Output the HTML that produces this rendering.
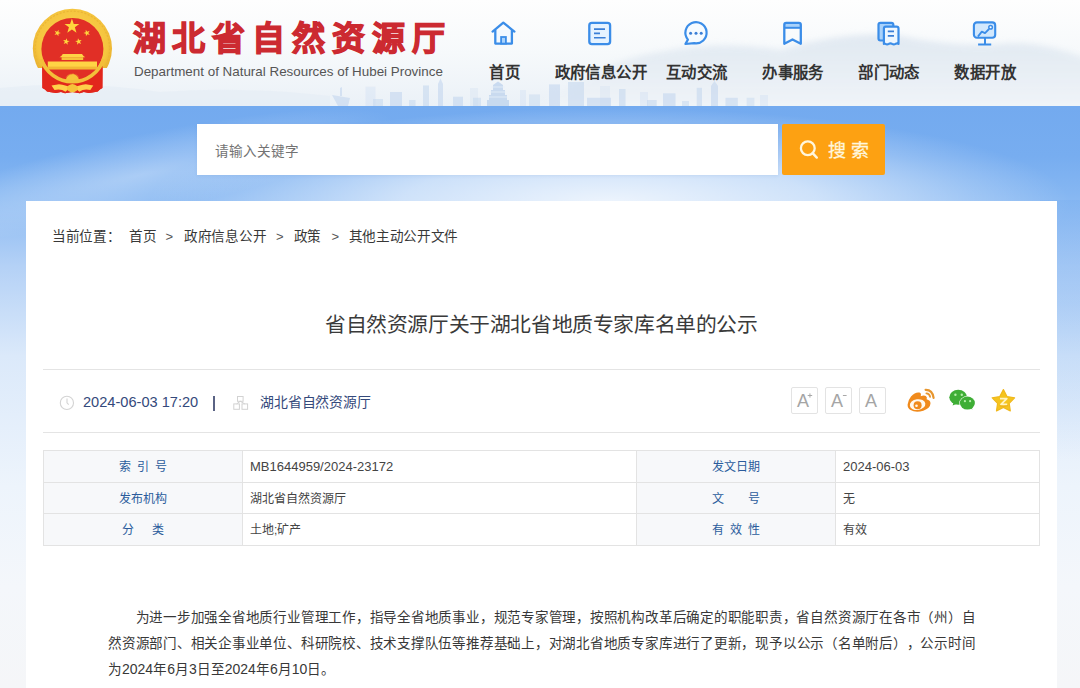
<!DOCTYPE html>
<html lang="zh-CN"><head><meta charset="utf-8">
<style>
*{margin:0;padding:0;box-sizing:border-box}
html,body{width:1080px;height:688px;overflow:hidden;background:#f4f7fb}
body{position:relative;font-family:"Liberation Sans",sans-serif;color:#333;text-spacing-trim:space-all}
.abs{position:absolute}
#hdr{left:0;top:0;width:1080px;height:106px;background:linear-gradient(180deg,#fefefe 0%,#f6f9fb 50%,#ebf1f7 100%);overflow:hidden}
#band{left:0;top:106px;width:1080px;height:582px;background:linear-gradient(180deg,#73aaef 0px,#77adf0 50px,#86b7f2 90px,#b4d1f6 160px,#dbe9fa 250px,#edf4fc 380px,#f4f7fb 480px,#f5f6f8 582px)}
#glow{left:110px;top:108px;width:960px;height:190px;background:radial-gradient(closest-side ellipse at 52% 50%,rgba(255,255,255,.85) 0%,rgba(255,255,255,.6) 45%,rgba(255,255,255,.2) 80%,rgba(255,255,255,0) 100%)}
#rstrip{left:1040px;top:200px;width:40px;height:260px;background:linear-gradient(180deg,rgba(120,174,240,.35) 0%,rgba(120,174,240,.3) 40%,rgba(120,174,240,0) 100%)}
#streak{left:-120px;top:135px;width:520px;height:80px;transform:rotate(-12deg);background:radial-gradient(closest-side ellipse,rgba(255,255,255,.35) 0%,rgba(255,255,255,.15) 60%,rgba(255,255,255,0) 100%)}
#title{left:132.5px;top:16.5px;font-size:33px;font-weight:700;color:#cc2a31;letter-spacing:6.9px;white-space:nowrap;line-height:44px;-webkit-text-stroke:1.3px #cc2a31;text-shadow:0 0 2px #fff,0 0 3px #fff}
#sub{left:134px;top:64px;font-size:13.4px;color:#555;white-space:nowrap;line-height:16px}
.nav{top:62px;width:120px;text-align:center;font-size:15.4px;letter-spacing:0.4px;text-indent:0.4px;font-weight:700;color:#333;line-height:22px;white-space:nowrap}
#sinput{left:197px;top:124px;width:581px;height:51px;background:#fff;box-shadow:0 1px 3px rgba(60,110,180,.10)}
#sinput span{position:absolute;left:18px;top:18.8px;font-size:13.6px;color:#737373;line-height:18px;white-space:nowrap}
#sbtn{left:782px;top:124px;width:103px;height:51px;background:#fda112;border-radius:2px}
#sbtn span{position:absolute;left:46px;top:16px;-webkit-text-stroke:0.3px #fff6dc;font-size:18px;color:#fff6dc;letter-spacing:5px;line-height:22px;white-space:nowrap}
#card{left:26px;top:201px;width:1031px;height:500px;background:#fff}
.crumb{top:227.8px;font-size:13.6px;color:#383838;line-height:18px;white-space:nowrap;letter-spacing:-0.3px}
.crumb.gt{font-size:13px;color:#555}
#h1{left:325px;top:311.2px;font-size:20.8px;letter-spacing:-0.4px;color:#3a3a3a;line-height:28px;white-space:nowrap}
.hr{left:43px;width:997px;height:1px;background:#e4e4e4}
#date{left:83px;top:393px;font-size:14.6px;color:#34497b;line-height:18px;white-space:nowrap}
#sep{left:213px;top:396px;width:2px;height:14.7px;background:#5a6384}
#org{left:260px;top:393px;font-size:13.9px;letter-spacing:-0.15px;color:#34497b;line-height:18px;white-space:nowrap}
.fbox{top:386.5px;width:27px;height:27px;border:1px solid #e3e3e3;border-radius:2px}
.fbox i{position:absolute;left:5px;top:4.8px;font-style:normal;color:#a5a5a5;font-size:18px;line-height:18px}
#tbl{left:43px;top:450px;width:997px;height:96px;border:1px solid #e3e3e3;border-bottom:none}
.row{position:absolute;left:0;width:995px;height:31.6px;border-bottom:1px solid #e3e3e3}
.row>div{position:absolute;top:0;height:30.6px;line-height:32.4px;font-size:12px;white-space:nowrap}
.l{background:#f7f8fa;color:#2b5c9c;text-align:center}
.v{color:#444;padding-left:7px;font-size:13px!important}
.v.cj{font-size:12px!important}
.c1{left:0;width:199px;border-right:1px solid #e3e3e3}
.c2{left:199px;width:394px;border-right:1px solid #e3e3e3}
.c3{left:593px;width:199px;border-right:1px solid #e3e3e3}
.c4{left:792px;width:203px}
.pl{left:108px;width:867px;font-size:13.55px;line-height:18px;color:#383838;white-space:nowrap}
.pl.last{text-align-last:left}
.d{font-weight:400;font-size:14px}
</style></head><body>
<div id="hdr" class="abs"></div>
<svg class="abs" style="left:0;top:0" width="1080" height="106" viewBox="0 0 1080 106">
<defs><filter id="bl" x="-10%" y="-50%" width="120%" height="200%"><feGaussianBlur stdDeviation="3"/></filter>
<linearGradient id="mg" x1="0" y1="0" x2="0" y2="1"><stop offset="0" stop-color="#d9e3ee"/><stop offset="0.55" stop-color="#e6edf4"/><stop offset="1" stop-color="#f3f6f9"/></linearGradient></defs>
<path d="M540 110 Q600 60 660 52 Q720 40 780 50 Q850 30 900 36 Q960 48 1000 44 Q1040 40 1090 60 V110 Z" fill="url(#mg)" opacity=".75" filter="url(#bl)"/>
<path d="M0 106 V88 Q80 80 160 92 Q240 86 330 96 V106 Z" fill="#e4ecf5" opacity=".6"/>
<rect x="365.5" y="86.7" width="10.0" height="19.3" fill="#c3d6ee" opacity="0.26"/><rect x="373.0" y="99.0" width="10.0" height="7.0" fill="#c3d6ee" opacity="0.52"/><rect x="390.0" y="92.0" width="12.0" height="14.0" fill="#c3d6ee" opacity="0.60"/><rect x="409.0" y="100.0" width="6.5" height="6.0" fill="#c3d6ee" opacity="0.52"/><rect x="423.0" y="85.5" width="6.0" height="20.5" fill="#c3d6ee" opacity="0.56"/><rect x="453.0" y="96.7" width="10.0" height="9.3" fill="#c3d6ee" opacity="0.60"/><rect x="473.0" y="97.8" width="8.0" height="8.2" fill="#c3d6ee" opacity="0.52"/><rect x="529.0" y="94.4" width="11.0" height="11.6" fill="#c3d6ee" opacity="0.45"/><rect x="549.0" y="84.4" width="11.0" height="21.6" fill="#c3d6ee" opacity="0.60"/><rect x="568.0" y="82.0" width="16.0" height="24.0" fill="#c3d6ee" opacity="0.56"/><rect x="587.0" y="97.8" width="24.0" height="8.2" fill="#c3d6ee" opacity="0.60"/><rect x="619.0" y="89.0" width="6.5" height="17.0" fill="#c3d6ee" opacity="0.56"/><rect x="647.0" y="100.0" width="9.7" height="6.0" fill="#c3d6ee" opacity="0.56"/><rect x="663.0" y="93.3" width="12.5" height="12.7" fill="#c3d6ee" opacity="0.60"/><rect x="682.0" y="101.0" width="7.0" height="5.0" fill="#c3d6ee" opacity="0.52"/><rect x="696.7" y="87.8" width="5.3" height="18.2" fill="#c3d6ee" opacity="0.56"/><rect x="725.5" y="97.8" width="12.3" height="8.2" fill="#c3d6ee" opacity="0.56"/><rect x="746.7" y="97.8" width="7.7" height="8.2" fill="#c3d6ee" opacity="0.45"/><rect x="760.0" y="95.0" width="8.0" height="11.0" fill="#c3d6ee" opacity="0.26"/><rect x="520.0" y="90.0" width="6.0" height="16.0" fill="#c3d6ee" opacity="0.26"/><rect x="600.0" y="86.0" width="10.0" height="20.0" fill="#c3d6ee" opacity="0.22"/><rect x="640.0" y="92.0" width="8.0" height="14.0" fill="#c3d6ee" opacity="0.26"/><rect x="470.0" y="88.0" width="8.0" height="18.0" fill="#c3d6ee" opacity="0.22"/><path d="M438 106 V84 L440.5 78.5 L443 84 V106 Z" fill="#c3d6ee" opacity="0.60"/>
<path d="M711 106 V86 L714.5 81 L718 86 V106 Z" fill="#c3d6ee" opacity="0.60"/>
<path d="M332 95 L350 98 L348 106 H338 Z M340 96 V88 L342 87 V96 Z" fill="#c3d6ee" opacity="0.60"/>
<path d="M487 106 V100 H489 V95 H491 V90 H493 V85 L498 81.5 L503 85 V90 H505 V95 H507 V100 H509 V106 Z" fill="#bcd2ec" opacity=".75"/>
<path d="M490 92 H506 M489 97 H507 M491 87 H505" stroke="#e8f0f8" stroke-width="1" opacity=".8"/>
</svg>
<div id="band" class="abs"></div>
<div id="glow" class="abs"></div>
<div id="streak" class="abs"></div>
<div id="rstrip" class="abs"></div>

<!-- emblem -->
<svg class="abs" style="left:28px;top:4px" width="90" height="94" viewBox="0 0 90 94">
<defs>
<radialGradient id="rg" cx="50%" cy="45%" r="55%"><stop offset="0" stop-color="#ffd65a"/><stop offset="0.8" stop-color="#f5c53e"/><stop offset="1" stop-color="#e6ab2a"/></radialGradient>
<clipPath id="ctop"><rect x="0" y="0" width="90" height="64"/></clipPath>
</defs>
<path d="M14.2 58 L14.4 84 L17 85.5 L19 87.6 L23 88.2 L28 89 L33 88 L37 89.2 L44.4 88 L51.8 89.2 L55.8 88 L60.8 89 L65.8 88.2 L69.8 87.6 L71.8 85.5 L74.4 84 L74.6 58 Z" fill="#e2261c"/>
<circle cx="44.4" cy="44.4" r="39.6" fill="url(#rg)" clip-path="url(#ctop)"/>
<circle cx="44.4" cy="44.4" r="37.2" fill="none" stroke="#eab636" stroke-width="1.2" stroke-dasharray="2 1.6" clip-path="url(#ctop)"/>
<path d="M14.2 62 L14.4 84 L17 85.5 L19 87.6 L23 88.2 L28 89 L33 88 L37 89.2 L44.4 88 L51.8 89.2 L55.8 88 L60.8 89 L65.8 88.2 L69.8 87.6 L71.8 85.5 L74.4 84 L74.6 62 Q60 74 44.4 78 Q28.8 74 14.2 62 Z" fill="#e2261c"/>
<circle cx="44.4" cy="45" r="31" fill="#e12f26"/>
<polygon points="43.90,14.60 45.73,19.88 51.32,19.99 46.87,23.36 48.48,28.71 43.90,25.52 39.32,28.71 40.93,23.36 36.48,19.99 42.07,19.88" fill="#ffd53d"/><polygon points="30.60,25.71 30.56,28.22 32.90,29.12 30.50,29.86 30.36,32.36 28.92,30.32 26.50,30.96 28.00,28.95 26.64,26.85 29.01,27.65" fill="#ffd53d"/><polygon points="57.70,25.71 59.29,27.65 61.66,26.85 60.30,28.95 61.80,30.96 59.38,30.32 57.94,32.36 57.80,29.86 55.40,29.12 57.74,28.22" fill="#ffd53d"/><polygon points="38.81,34.15 39.21,36.63 41.67,37.11 39.44,38.26 39.73,40.75 37.96,38.98 35.68,40.03 36.81,37.79 35.11,35.96 37.59,36.34" fill="#ffd53d"/><polygon points="49.99,34.15 51.21,36.34 53.69,35.96 51.99,37.79 53.12,40.03 50.84,38.98 49.07,40.75 49.36,38.26 47.13,37.11 49.59,36.63" fill="#ffd53d"/>
<path d="M31.5 53.2 Q33.5 52.2 34.8 50 H54 Q55.3 52.2 57.3 53.2 Z" fill="#ffd445"/>
<rect x="33.6" y="53.2" width="21.6" height="2.8" fill="#f6c43a"/>
<path d="M19.8 57.4 H69 V65.3 H19.8 Z" fill="#ffd445"/>
<rect x="19.8" y="62.6" width="49.2" height="2.7" fill="#f2b935"/>
<polygon points="37.00,76.60 38.43,76.01 37.14,75.16 38.66,74.86 37.56,73.77 39.11,73.77 38.25,72.49 39.76,72.80 39.17,71.37 40.59,71.96 40.29,70.45 41.57,71.31 41.57,69.76 42.66,70.86 42.96,69.34 43.81,70.63 44.40,69.20 44.99,70.63 45.84,69.34 46.14,70.86 47.23,69.76 47.23,71.31 48.51,70.45 48.20,71.96 49.63,71.37 49.04,72.79 50.55,72.49 49.69,73.77 51.24,73.77 50.14,74.86 51.66,75.16 50.37,76.01 51.80,76.60" fill="#f7c43a"/><path d="M13.21 55.14 A32.8 32.8 0 0 0 75.59 55.14" fill="none" stroke="#f3bf3a" stroke-width="3.6"/>
<path d="M23.5 81.5 L31 80.3 Q38 81 42 83.5 L37.5 87.8 Q33 84.5 26.5 86 Z" fill="#ffd04a"/>
<path d="M65.3 81.5 L57.8 80.3 Q50.8 81 46.8 83.5 L51.3 87.8 Q55.8 84.5 62.3 86 Z" fill="#ffd04a"/>
<polygon points="38.6,83.6 40.5,81.4 42.5,80.6 44.4,80 46.3,80.6 48.3,81.4 50.2,83.6 49,86.5 46.5,88 44.4,88.6 42.3,88 39.8,86.5" fill="#f6c33a"/>
</svg>

<div id="title" class="abs">湖北省自然资源厅</div>
<div id="sub" class="abs">Department of Natural Resources of Hubei Province</div>

<div class="nav abs" style="left:444.5px">首页</div>
<div class="nav abs" style="left:540.6px">政府信息公开</div>
<div class="nav abs" style="left:636.7px">互动交流</div>
<div class="nav abs" style="left:732.8px">办事服务</div>
<div class="nav abs" style="left:828.9px">部门动态</div>
<div class="nav abs" style="left:925.0px">数据开放</div>

<svg class="abs" style="left:486px;top:16px" width="35" height="34" viewBox="0 0 35 34"><path d="M6.6 15.6 L17.3 6.6 L28.4 15.6" fill="none" stroke="#3b8de8" stroke-width="2.3" stroke-linecap="round" stroke-linejoin="round"/>
<path d="M9.3 14 V27.6 H25.9 V14" fill="#f3f9ff" stroke="#3b8de8" stroke-width="2.3" stroke-linejoin="round"/>
<rect x="15.1" y="21" width="4.8" height="6.6" fill="#a9d2fb" stroke="#3b8de8" stroke-width="1.8"/></svg>
<svg class="abs" style="left:582px;top:16px" width="35" height="34" viewBox="0 0 35 34"><rect x="7.3" y="6.8" width="20.8" height="21.3" rx="2.6" fill="#e6f3ff" stroke="#3b8de8" stroke-width="2.3"/>
<path d="M12 13.1 H23 M12 17.4 H18 M12 21.7 H23.6" stroke="#3b7fd6" stroke-width="1.6"/></svg>
<svg class="abs" style="left:678px;top:16px" width="35" height="34" viewBox="0 0 35 34"><path d="M9.9 23.6 A10.6 10.6 0 1 1 16.2 27.2 L7.4 28 Z" fill="#f6fbff" stroke="#3b8de8" stroke-width="2.2" stroke-linejoin="round"/>
<circle cx="12.6" cy="17.3" r="1.5" fill="#3b7fd6"/><circle cx="18" cy="17.3" r="1.5" fill="#3b7fd6"/><circle cx="23.2" cy="17.3" r="1.5" fill="#3b7fd6"/></svg>
<svg class="abs" style="left:775px;top:16px" width="35" height="34" viewBox="0 0 35 34"><rect x="9.3" y="6.9" width="16.5" height="4.8" fill="#a9d2fb"/>
<path d="M9.3 27.8 V8.8 Q9.3 6.9 11.2 6.9 H23.9 Q25.8 6.9 25.8 8.8 V27.8 L17.5 23.5 Z" fill="none" stroke="#3b8de8" stroke-width="2.3" stroke-linejoin="round"/>
<path d="M9.3 11.8 H25.8" stroke="#3b8de8" stroke-width="2"/></svg>
<svg class="abs" style="left:871px;top:16px" width="35" height="34" viewBox="0 0 35 34"><path d="M12 24.5 H9.4 Q7.5 24.5 7.5 22.6 V8.6 Q7.5 6.8 9.4 6.8 H20.4 Q22.3 6.8 22.3 8.6 V10.6" fill="#a9d2fb" stroke="#3b8de8" stroke-width="2.2" stroke-linejoin="round"/>
<path d="M12.9 27.9 V12.4 Q12.9 10.6 14.8 10.6 H25.6 Q27.5 10.6 27.5 12.4 V27.9 Q26.2 26.7 24.5 27.9 Q22.8 29 21.1 27.9 Q19.4 26.7 17.8 27.9 Q16.1 29 14.5 27.9 Q13.7 27.3 12.9 27.9 Z" fill="#eef7ff" stroke="#3b8de8" stroke-width="2.2" stroke-linejoin="round"/>
<path d="M16.8 15.3 H23 M16.8 19.8 H23" stroke="#3b7fd6" stroke-width="1.7"/></svg>
<svg class="abs" style="left:967px;top:16px" width="35" height="34" viewBox="0 0 35 34"><rect x="6.9" y="6.4" width="21.3" height="15.3" rx="3" fill="#d2e8fd" stroke="#3b8de8" stroke-width="2.1"/>
<path d="M10.9 20.6 L14.8 15.6 L18 17.1 L22 13" fill="none" stroke="#3b8de8" stroke-width="1.8" stroke-linejoin="round"/>
<circle cx="23.6" cy="11.3" r="1.8" fill="#fff" stroke="#3b8de8" stroke-width="1.5"/>
<path d="M18 21.7 V28.6 M11.1 28.6 H24.2" stroke="#3b8de8" stroke-width="2"/></svg>
<div id="sinput" class="abs"><span>请输入关键字</span></div>
<div id="sbtn" class="abs"><span>搜索</span></div>
<svg class="abs" style="left:796px;top:136px" width="26" height="26" viewBox="0 0 26 26"><circle cx="11.8" cy="12.3" r="6.9" fill="none" stroke="#fff6dc" stroke-width="2.3"/><path d="M16.6 17.2 L20.8 21.6" stroke="#fff6dc" stroke-width="2.4" stroke-linecap="round"/></svg>

<div id="card" class="abs"></div>
<div class="crumb abs" style="left:52px">当前位置：</div>
<div class="crumb abs" style="left:129px">首页</div>
<div class="crumb gt abs" style="left:165.5px">&gt;</div>
<div class="crumb abs" style="left:184px">政府信息公开</div>
<div class="crumb gt abs" style="left:276px">&gt;</div>
<div class="crumb abs" style="left:293.5px">政策</div>
<div class="crumb gt abs" style="left:331.5px">&gt;</div>
<div class="crumb abs" style="left:348.5px">其他主动公开文件</div>

<div id="h1" class="abs">省自然资源厅关于湖北省地质专家库名单的公示</div>
<div class="hr abs" style="top:369px"></div>
<div class="hr abs" style="top:432px"></div>
<svg class="abs" style="left:55px;top:390px" width="25" height="25" viewBox="0 0 25 25"><circle cx="11.9" cy="12.9" r="6.6" fill="none" stroke="#d4d4d4" stroke-width="1.1"/><path d="M12 8.6 V12.8 L13.7 14.6" fill="none" stroke="#d4d4d4" stroke-width="1.1"/></svg>
<div id="date" class="abs">2024-06-03 17:20</div>
<div id="sep" class="abs"></div>
<svg class="abs" style="left:230px;top:393px" width="20" height="19" viewBox="0 0 20 19"><rect x="7.5" y="3.5" width="5.6" height="4.8" fill="none" stroke="#d2d2d2" stroke-width="1"/><rect x="3.8" y="10.9" width="5.6" height="5.4" fill="none" stroke="#d2d2d2" stroke-width="1"/><rect x="12" y="10.9" width="5.6" height="5.4" fill="none" stroke="#d2d2d2" stroke-width="1"/><path d="M10.3 8.3 L6.6 10.9 M10.3 8.3 L14.8 10.9" stroke="#d2d2d2" stroke-width="1"/></svg>
<div id="org" class="abs">湖北省自然资源厅</div>
<div class="fbox abs" style="left:791px"><i>A</i><svg class="abs" style="left:14.8px;top:5.8px" width="6" height="6" viewBox="0 0 6 6"><path d="M0.7 2.5 H5.2 M2.95 0.4 V4.6" stroke="#a8a8a8" stroke-width="1"/></svg></div>
<div class="fbox abs" style="left:825px"><i>A</i><svg class="abs" style="left:16px;top:5.5px" width="6" height="6" viewBox="0 0 6 6"><path d="M0.9 2.5 H4.6" stroke="#a8a8a8" stroke-width="1"/></svg></div>
<div class="fbox abs" style="left:859px"><i>A</i></div>

<!-- weibo -->
<svg class="abs" style="left:902px;top:383px" width="40" height="35" viewBox="0 0 40 35">
<path d="M9 13.5 Q13.5 8.6 17.5 9.6 Q19.6 10.4 18.7 13.2 Q21.8 11.9 23.8 12.9 Q25.6 14 24.6 16.2 Q28.6 17.2 28.5 20.6 Q28.2 25.4 21.3 27.8 Q13.5 30 8.5 27 Q5.4 25 5.6 21.4 Q5.9 17.4 9 13.5 Z" fill="#f08a1c"/>
<ellipse cx="15.6" cy="21.6" rx="7.8" ry="5.4" transform="rotate(-8 15.6 21.6)" fill="#fff8ee"/>
<circle cx="15.6" cy="22.2" r="4" fill="#f08a1c"/>
<circle cx="14.5" cy="22.8" r="1.3" fill="#fff8ee"/>
<path d="M23.6 6.8 Q30.4 6.6 31.6 14.8" fill="none" stroke="#e7962e" stroke-width="2.2" stroke-linecap="round"/>
<path d="M24.4 10.4 Q27.6 10.6 28.1 13.9" fill="none" stroke="#e7962e" stroke-width="1.8" stroke-linecap="round"/>
</svg>
<!-- wechat -->
<svg class="abs" style="left:944px;top:383px" width="40" height="35" viewBox="0 0 40 35">
<ellipse cx="14.2" cy="14.3" rx="8.9" ry="7.5" fill="#3fae36"/>
<path d="M9.5 19.5 L8.6 22.6 L12.8 20.8 Z" fill="#3fae36"/>
<circle cx="11.4" cy="11.8" r="1.2" fill="#b4f0a8"/><circle cx="17.8" cy="11.8" r="1.2" fill="#b4f0a8"/>
<ellipse cx="23.4" cy="20.1" rx="8.1" ry="7" fill="#fff"/>
<ellipse cx="23.4" cy="20.1" rx="7.5" ry="6.5" fill="#3fae36"/>
<path d="M26.5 24.8 L28.3 26.8 L27.8 23.6 Z" fill="#3fae36"/>
<circle cx="20.9" cy="18.2" r="1.1" fill="#b4f0a8"/><circle cx="26.1" cy="18.2" r="1.1" fill="#b4f0a8"/>
</svg>
<!-- qq star -->
<svg class="abs" style="left:986px;top:383px" width="35" height="35" viewBox="0 0 35 35">
<path d="M17.4 6.6 L21.0 13.5 L28.6 14.8 L23.2 20.3 L24.3 27.9 L17.4 24.5 L10.5 27.9 L11.6 20.3 L6.2 14.8 L13.8 13.5 Z" fill="#f5c41e" stroke="#f0b81c" stroke-width="1.2" stroke-linejoin="round"/>
<path d="M14 15.6 H20.8 L15 21.4 H21.2" fill="none" stroke="#fff4c4" stroke-width="1.8" stroke-linejoin="round"/>
<path d="M13.5 22.8 Q17.5 24 22 22.6" fill="none" stroke="#e9a21a" stroke-width="1" opacity=".7"/>
</svg>

<div id="tbl" class="abs">
<div class="row" style="top:0"><div class="l c1" style="letter-spacing:6px;padding-left:6px">索引号</div><div class="v c2">MB1644959/2024-23172</div><div class="l c3">发文日期</div><div class="v c4">2024-06-03</div></div>
<div class="row" style="top:31.6px"><div class="l c1">发布机构</div><div class="v c2 cj">湖北省自然资源厅</div><div class="l c3" style="letter-spacing:24px;padding-left:24px">文号</div><div class="v c4 cj">无</div></div>
<div class="row" style="top:63.2px"><div class="l c1" style="letter-spacing:18px;padding-left:18px">分类</div><div class="v c2 cj">土地;矿产</div><div class="l c3" style="letter-spacing:6px;padding-left:6px">有效性</div><div class="v c4 cj">有效</div></div>
</div>

<div class="pl abs" style="top:609.2px;text-indent:27.5px;letter-spacing:-0.23px">为进一步加强全省地质行业管理工作，指导全省地质事业，规范专家管理，按照机构改革后确定的职能职责，省自然资源厅在各市（州）自</div>
<div class="pl abs" style="top:634.5px;letter-spacing:-0.23px">然资源部门、相关企事业单位、科研院校、技术支撑队伍等推荐基础上，对湖北省地质专家库进行了更新，现予以公示（名单附后），公示时间</div>
<div class="pl abs last" style="top:659.8px">为<b class="d">2024</b>年<b class="d">6</b>月<b class="d">3</b>日至<b class="d">2024</b>年<b class="d">6</b>月<b class="d">10</b>日。</div>
</body></html>
